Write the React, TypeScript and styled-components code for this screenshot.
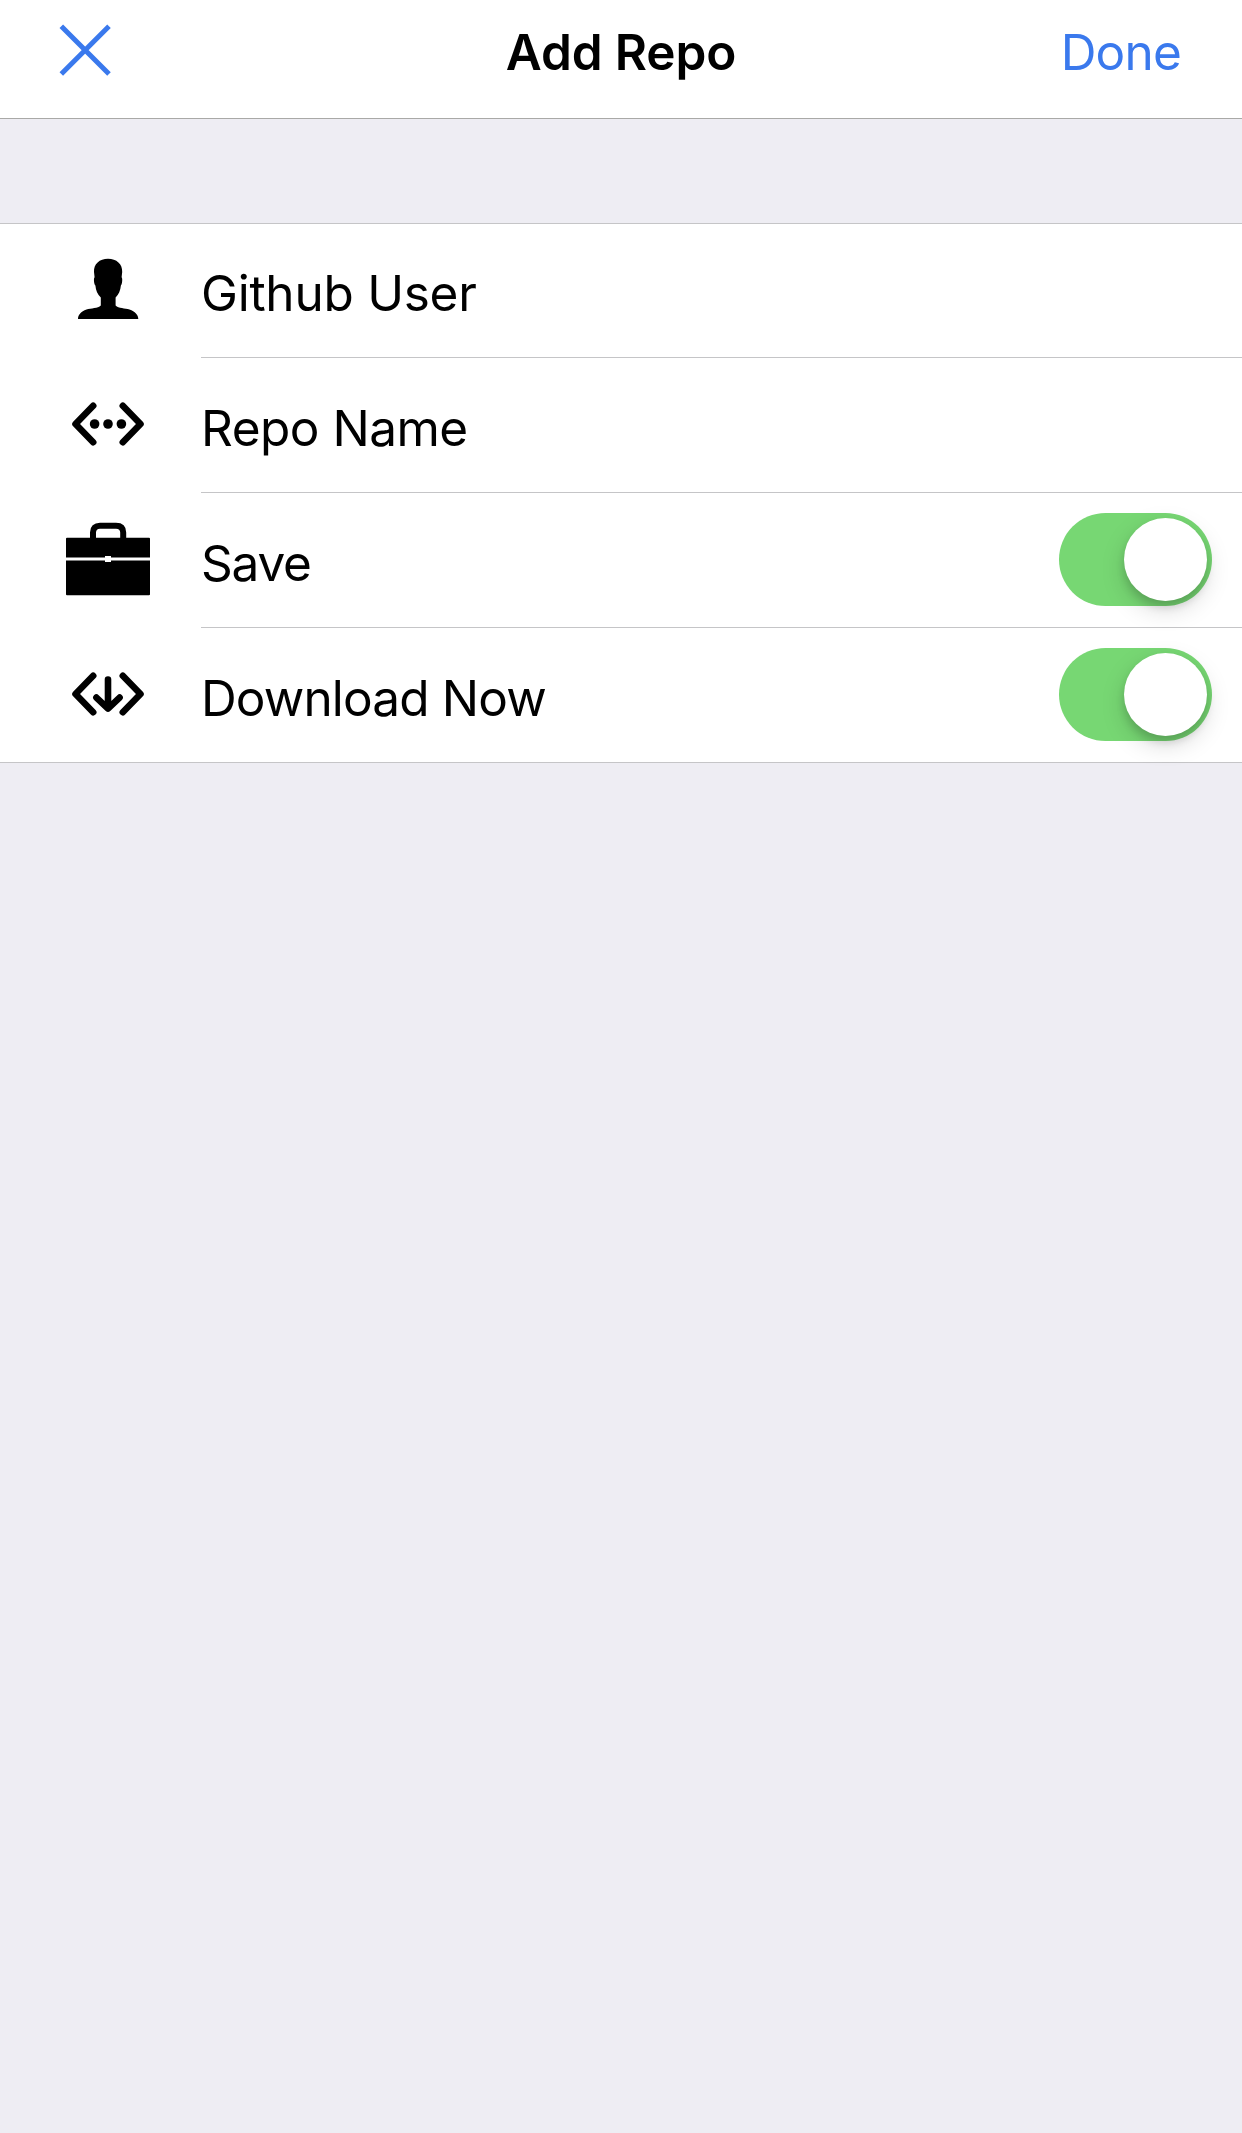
import React, { useState } from "react";
import styled, { createGlobalStyle } from "styled-components";

const GlobalStyle = createGlobalStyle`
  * { box-sizing: border-box; }
  body {
    margin: 0;
    background: #eeedf3;
    font-family: Inter, "Liberation Sans", sans-serif;
    color: #000;
  }
`;

const Screen = styled.main`
  min-height: 2133px;
  background: #eeedf3;
`;

const NavBar = styled.header`
  display: grid;
  grid-template-columns: 1fr auto 1fr;
  align-items: start;
  height: 119px;
  margin-bottom: 104px;
  background: #fff;
  border-bottom: 1px solid #a9a9a7;
`;

const Title = styled.h1`
  margin: 22px 0 0;
  font-size: 49.5px;
  font-weight: 600;
  line-height: 60px;
  letter-spacing: -0.15px;
`;

const BarButton = styled.button`
  padding: 0;
  border: 0;
  background: none;
  color: #3a79ed;
  font: inherit;
  cursor: pointer;
`;

const CloseButton = styled(BarButton)`
  justify-self: start;
  width: 56px;
  height: 56px;
  margin: 22px 0 0 57px;

  svg { display: block; }
`;

const DoneButton = styled(BarButton)`
  justify-self: end;
  margin: 22px 61px 0 0;
  font-size: 49.5px;
  line-height: 60px;
  letter-spacing: -0.8px;
`;

const Group = styled.section`
  background: #fff;
  border-top: 1px solid #c5c5c7;
  border-bottom: 1px solid #c5c5c7;
`;

const Row = styled.div`
  display: flex;
  height: 135px;

  &:first-child { margin-top: -1px; }
  &:last-child { height: 134px; }
`;

const IconCell = styled.div`
  flex: none;
  width: 201px;
  padding: 21px 0 0 63px;

  svg { display: block; }
`;

const RowBody = styled.div<{ $divided: boolean }>`
  flex: 1;
  display: flex;
  align-items: flex-start;
  justify-content: space-between;
  padding-right: 30px;
  border-bottom: ${(p) => (p.$divided ? "1px solid #c5c5c7" : "0")};
`;

const Label = styled.span<{ $tracking: number }>`
  margin-top: 40px;
  font-size: 49.5px;
  line-height: 60px;
  letter-spacing: ${(p) => p.$tracking}px;
  white-space: nowrap;
`;

const Track = styled.button<{ $on: boolean }>`
  display: flex;
  justify-content: ${(p) => (p.$on ? "flex-end" : "flex-start")};
  width: 153px;
  height: 93px;
  margin-top: 20px;
  padding: 5px;
  border: 0;
  border-radius: 47px;
  background: ${(p) => (p.$on ? "#77d773" : "#e5e5e5")};
  cursor: pointer;
`;

const Knob = styled.span`
  width: 83px;
  height: 83px;
  border-radius: 50%;
  background: #fff;
  box-shadow: 0 9px 24px rgba(0, 0, 0, 0.15), 0 6px 9px rgba(0, 0, 0, 0.14);
`;

const PersonIcon = () => (
  <svg width="90" height="90" viewBox="0 0 90 90">
    <path d="M45 14.7C36.5 14.7 30.6 20 31 28L31.6 33.2C30.6 33.8 30.7 39.5 32.4 41.5C32.8 46.5 34.5 50.5 37.8 53.5V61.5C35 64.5 28 64 23.5 65.6C18 67.5 15 71 15 75H75.3C75.3 71 72 67.5 66.5 65.6C62 64 55.5 64.5 52.6 61.5V53.5C55.8 50.5 57.4 46.5 57.9 41.5C59.5 39.5 59.6 33.8 58.6 33.2L59.2 28C59.6 20 53.5 14.7 45 14.7Z" />
  </svg>
);

const Chevrons = () => <path d="M30.2 26.8L12.5 45L30.2 63.2M59.8 26.8L77.5 45L59.8 63.2" />;

const RepoIcon = () => (
  <svg width="90" height="90" viewBox="0 0 90 90">
    <g fill="none" stroke="#000" strokeWidth="6.6" strokeLinecap="round" strokeLinejoin="round">
      <Chevrons />
    </g>
    <circle cx="31.6" cy="45" r="4.8" />
    <circle cx="45" cy="45" r="4.8" />
    <circle cx="58.4" cy="45" r="4.8" />
  </svg>
);

const DownloadIcon = () => (
  <svg width="90" height="90" viewBox="0 0 90 90">
    <g fill="none" stroke="#000" strokeWidth="6.6" strokeLinecap="round" strokeLinejoin="round">
      <Chevrons />
      <path d="M45 30.5V59.2M33.4 48.6L45 59.6L56.6 48.6" />
    </g>
  </svg>
);

const BriefcaseIcon = () => (
  <svg width="90" height="90" viewBox="0 0 90 90">
    <path d="M30 25V18.5Q30 11.7 37 11.7H53Q60.2 11.7 60.2 18.5V25" fill="none" stroke="#000" strokeWidth="6" />
    <path d="M4 23.7H86Q87 23.7 87 24.7V43.6H48V42H42V43.6H3V24.7Q3 23.7 4 23.7Z" />
    <path d="M3 46.4H42V48H48V46.4H87V80.3Q87 81.3 86 81.3H4Q3 81.3 3 80.3Z" />
  </svg>
);

type SwitchProps = { label: string };

function Switch({ label }: SwitchProps) {
  const [on, setOn] = useState(true);
  return (
    <Track type="button" role="switch" aria-checked={on} aria-label={label} $on={on} onClick={() => setOn(!on)}>
      <Knob />
    </Track>
  );
}

const rows = [
  { label: "Github User", Icon: PersonIcon, toggle: false, tracking: -0.25 },
  { label: "Repo Name", Icon: RepoIcon, toggle: false, tracking: -0.5 },
  { label: "Save", Icon: BriefcaseIcon, toggle: true, tracking: -1.2 },
  { label: "Download Now", Icon: DownloadIcon, toggle: true, tracking: -0.85 },
];

export default function App() {
  return (
    <Screen>
      <GlobalStyle />
      <NavBar>
        <CloseButton type="button" aria-label="Close">
          <svg width="56" height="56" viewBox="0 0 56 56" fill="none" stroke="currentColor" strokeWidth="5">
            <path d="M4.3 4.3L52 52M52 4.3L4.3 52" />
          </svg>
        </CloseButton>
        <Title>Add Repo</Title>
        <DoneButton type="button">Done</DoneButton>
      </NavBar>
      <Group>
        {rows.map(({ label, Icon, toggle, tracking }, i) => (
          <Row key={label}>
            <IconCell>
              <Icon />
            </IconCell>
            <RowBody $divided={i < rows.length - 1}>
              <Label $tracking={tracking}>{label}</Label>
              {toggle && <Switch label={label} />}
            </RowBody>
          </Row>
        ))}
      </Group>
    </Screen>
  );
}
